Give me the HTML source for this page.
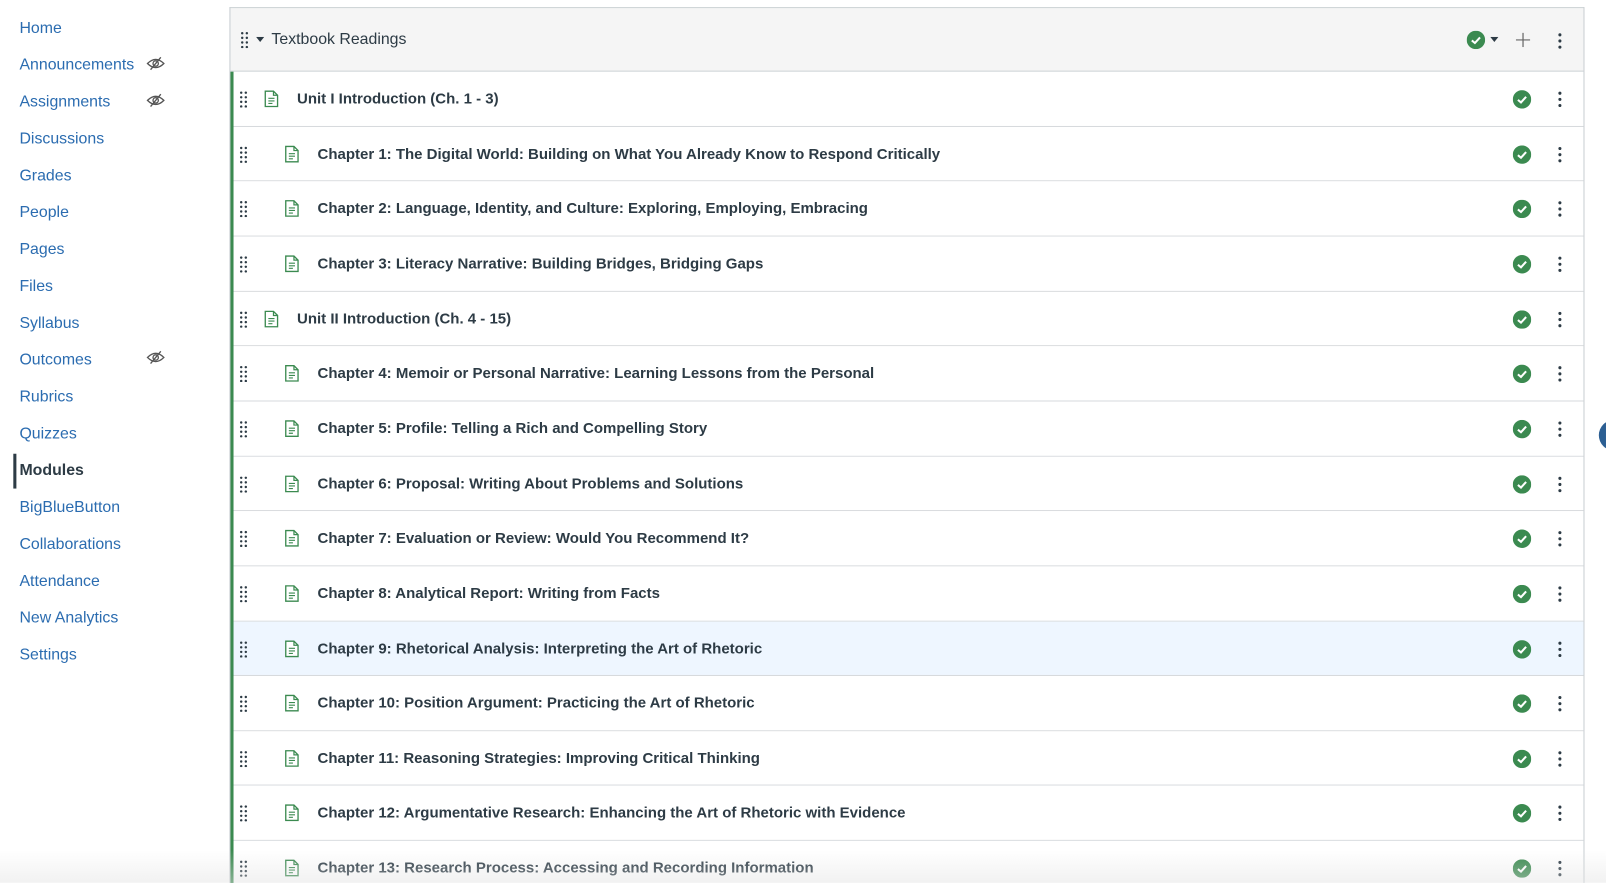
<!DOCTYPE html>
<html><head><meta charset="utf-8"><style>
*{margin:0;padding:0;box-sizing:border-box}
html,body{width:1606px;height:883px;overflow:hidden}
body{background:#fff;font-family:"Liberation Sans",sans-serif;position:relative}
#wrap{position:absolute;left:0;top:0;width:1568px;height:862px;transform:scale(1.02423);transform-origin:0 0;overflow:hidden}
.nav{position:absolute;left:19px;font-size:15.5px;color:#2b6cb0;line-height:20px}
.nav.act{color:#2d3b45;font-weight:bold}
.mod{position:absolute;left:224px;top:7px;width:1323px;height:860px;border:1px solid #c7cdd1;border-bottom:none;overflow:hidden}
.hdr{position:absolute;left:0;top:0;width:100%;height:62px;background:#f5f5f5;border-bottom:1px solid #c7cdd1}
.row{position:absolute;left:0;width:100%;border-bottom:1px solid #d7dadd;background:#fff}
.bar{position:absolute;left:-1px;top:62px;width:4px;height:814px;background:#3b8a50}
.t{position:absolute;font-weight:bold;font-size:14.65px;color:#2d3b45;white-space:nowrap;line-height:18px}
svg{position:absolute}
.fade{position:absolute;left:0;top:830px;width:1568px;height:32px;background:linear-gradient(rgba(255,255,255,0),rgba(225,225,225,0.45))}
</style></head><body><div id="wrap">
<div class="nav" style="top:18px">Home</div>
<div class="nav" style="top:54px">Announcements</div>
<div class="nav" style="top:90px">Assignments</div>
<div class="nav" style="top:126px">Discussions</div>
<div class="nav" style="top:162px">Grades</div>
<div class="nav" style="top:198px">People</div>
<div class="nav" style="top:234px">Pages</div>
<div class="nav" style="top:270px">Files</div>
<div class="nav" style="top:306px">Syllabus</div>
<div class="nav" style="top:342px">Outcomes</div>
<div class="nav" style="top:378px">Rubrics</div>
<div class="nav" style="top:414px">Quizzes</div>
<div style="position:absolute;left:13px;top:443px;width:3px;height:34px;background:#2d3b45"></div>
<div class="nav act" style="top:450px">Modules</div>
<div class="nav" style="top:486px">BigBlueButton</div>
<div class="nav" style="top:522px">Collaborations</div>
<div class="nav" style="top:558px">Attendance</div>
<div class="nav" style="top:594px">New Analytics</div>
<div class="nav" style="top:630px">Settings</div>
<svg style="left:143px;top:54px" width="18" height="16" viewBox="0 0 18 16"><path d="M1 8Q9 0 17 8Q9 16 1 8Z" fill="none" stroke="#555" stroke-width="1.3"/><circle cx="9" cy="8" r="2.6" fill="none" stroke="#555" stroke-width="1.3"/><path d="M14 2L4 14" stroke="#555" stroke-width="1.3"/></svg>
<svg style="left:143px;top:90px" width="18" height="16" viewBox="0 0 18 16"><path d="M1 8Q9 0 17 8Q9 16 1 8Z" fill="none" stroke="#555" stroke-width="1.3"/><circle cx="9" cy="8" r="2.6" fill="none" stroke="#555" stroke-width="1.3"/><path d="M14 2L4 14" stroke="#555" stroke-width="1.3"/></svg>
<svg style="left:143px;top:341px" width="18" height="16" viewBox="0 0 18 16"><path d="M1 8Q9 0 17 8Q9 16 1 8Z" fill="none" stroke="#555" stroke-width="1.3"/><circle cx="9" cy="8" r="2.6" fill="none" stroke="#555" stroke-width="1.3"/><path d="M14 2L4 14" stroke="#555" stroke-width="1.3"/></svg>

<div class="mod">
<div class="hdr">
 <svg style="left:10px;top:23px" width="8" height="16"><g fill="#2d3b45"><circle cx="1.5" cy="1.5" r="1.2"/><circle cx="6" cy="1.5" r="1.2"/><circle cx="1.5" cy="6" r="1.2"/><circle cx="6" cy="6" r="1.2"/><circle cx="1.5" cy="10.5" r="1.2"/><circle cx="6" cy="10.5" r="1.2"/><circle cx="1.5" cy="15" r="1.2"/><circle cx="6" cy="15" r="1.2"/></g></svg>
 <svg style="left:25px;top:28px" width="8" height="6"><path d="M0 0H8L4 5Z" fill="#2d3b45"/></svg>
 <div class="t" style="left:40px;top:22px;font-weight:normal;font-size:15.5px">Textbook Readings</div>
 <svg style="left:1207px;top:22px" width="18" height="18"><circle cx="9" cy="9" r="9" fill="#3b8a50"/><path d="M5 9.5L8 12L13 6.5" fill="none" stroke="#fff" stroke-width="2"/></svg>
 <svg style="left:1230px;top:28px" width="8" height="6"><path d="M0 0H8L4 5Z" fill="#2d3b45"/></svg>
 <svg style="left:1255px;top:24px" width="14" height="14"><path d="M7 0V14M0 7H14" stroke="#666" stroke-width="1.2"/></svg>
 <svg style="left:1296px;top:24px" width="4" height="16"><g fill="#2d3b45"><circle cx="2" cy="2" r="1.5"/><circle cx="2" cy="8" r="1.5"/><circle cx="2" cy="14" r="1.5"/></g></svg>
</div>
<div id="rows"></div>
<div class="bar"></div>
</div>
<div style="position:absolute;left:1561px;top:410px;width:30px;height:30px;border-radius:50%;background:#2c5f93"></div>
<div class="fade"></div>
</div>
<script>
(function(){
var t=["Unit I Introduction (Ch. 1 - 3)","Chapter 1: The Digital World: Building on What You Already Know to Respond Critically","Chapter 2: Language, Identity, and Culture: Exploring, Employing, Embracing","Chapter 3: Literacy Narrative: Building Bridges, Bridging Gaps","Unit II Introduction (Ch. 4 - 15)","Chapter 4: Memoir or Personal Narrative: Learning Lessons from the Personal","Chapter 5: Profile: Telling a Rich and Compelling Story","Chapter 6: Proposal: Writing About Problems and Solutions","Chapter 7: Evaluation or Review: Would You Recommend It?","Chapter 8: Analytical Report: Writing from Facts","Chapter 9: Rhetorical Analysis: Interpreting the Art of Rhetoric","Chapter 10: Position Argument: Practicing the Art of Rhetoric","Chapter 11: Reasoning Strategies: Improving Critical Thinking","Chapter 12: Argumentative Research: Enhancing the Art of Rhetoric with Evidence","Chapter 13: Research Process: Accessing and Recording Information"];
var h="";
for(var i=0;i<t.length;i++){
 var ry=Math.round(62+53.65*i), ny=Math.round(62+53.65*(i+1)), unit=t[i].indexOf("Unit")==0, ix=unit?33:53, tx=unit?65:85;
 h+='<div class="row" style="top:'+ry+'px;height:'+(ny-ry)+'px;'+(i==10?'background:#eef6ff;':'')+'">'+
 '<svg style="left:9px;top:19px" width="8" height="16"><g fill="#2d3b45"><circle cx="1.5" cy="1.5" r="1.2"/><circle cx="6" cy="1.5" r="1.2"/><circle cx="1.5" cy="6" r="1.2"/><circle cx="6" cy="6" r="1.2"/><circle cx="1.5" cy="10.5" r="1.2"/><circle cx="6" cy="10.5" r="1.2"/><circle cx="1.5" cy="15" r="1.2"/><circle cx="6" cy="15" r="1.2"/></g></svg>'+
 '<svg style="left:'+ix+'px;top:18px" width="14" height="17"><path d="M1 1H9L13 5V16H1Z" fill="#fff" stroke="#3b8a50" stroke-width="1.3"/><path d="M9 1V5H13" fill="none" stroke="#3b8a50" stroke-width="1.2"/><path d="M4 8H10M4 10.5H10M4 13H8" stroke="#3b8a50" stroke-width="1.1"/></svg>'+
 '<div class="t" style="left:'+tx+'px;top:18px">'+t[i]+'</div>'+
 '<svg style="left:1252px;top:18px" width="18" height="18"><circle cx="9" cy="9" r="9" fill="#3b8a50"/><path d="M5 9.5L8 12L13 6.5" fill="none" stroke="#fff" stroke-width="2"/></svg>'+
 '<svg style="left:1296px;top:19px" width="4" height="16"><g fill="#2d3b45"><circle cx="2" cy="2" r="1.5"/><circle cx="2" cy="8" r="1.5"/><circle cx="2" cy="14" r="1.5"/></g></svg></div>';
}
document.getElementById("rows").innerHTML=h;
})();
</script>
</body></html>
